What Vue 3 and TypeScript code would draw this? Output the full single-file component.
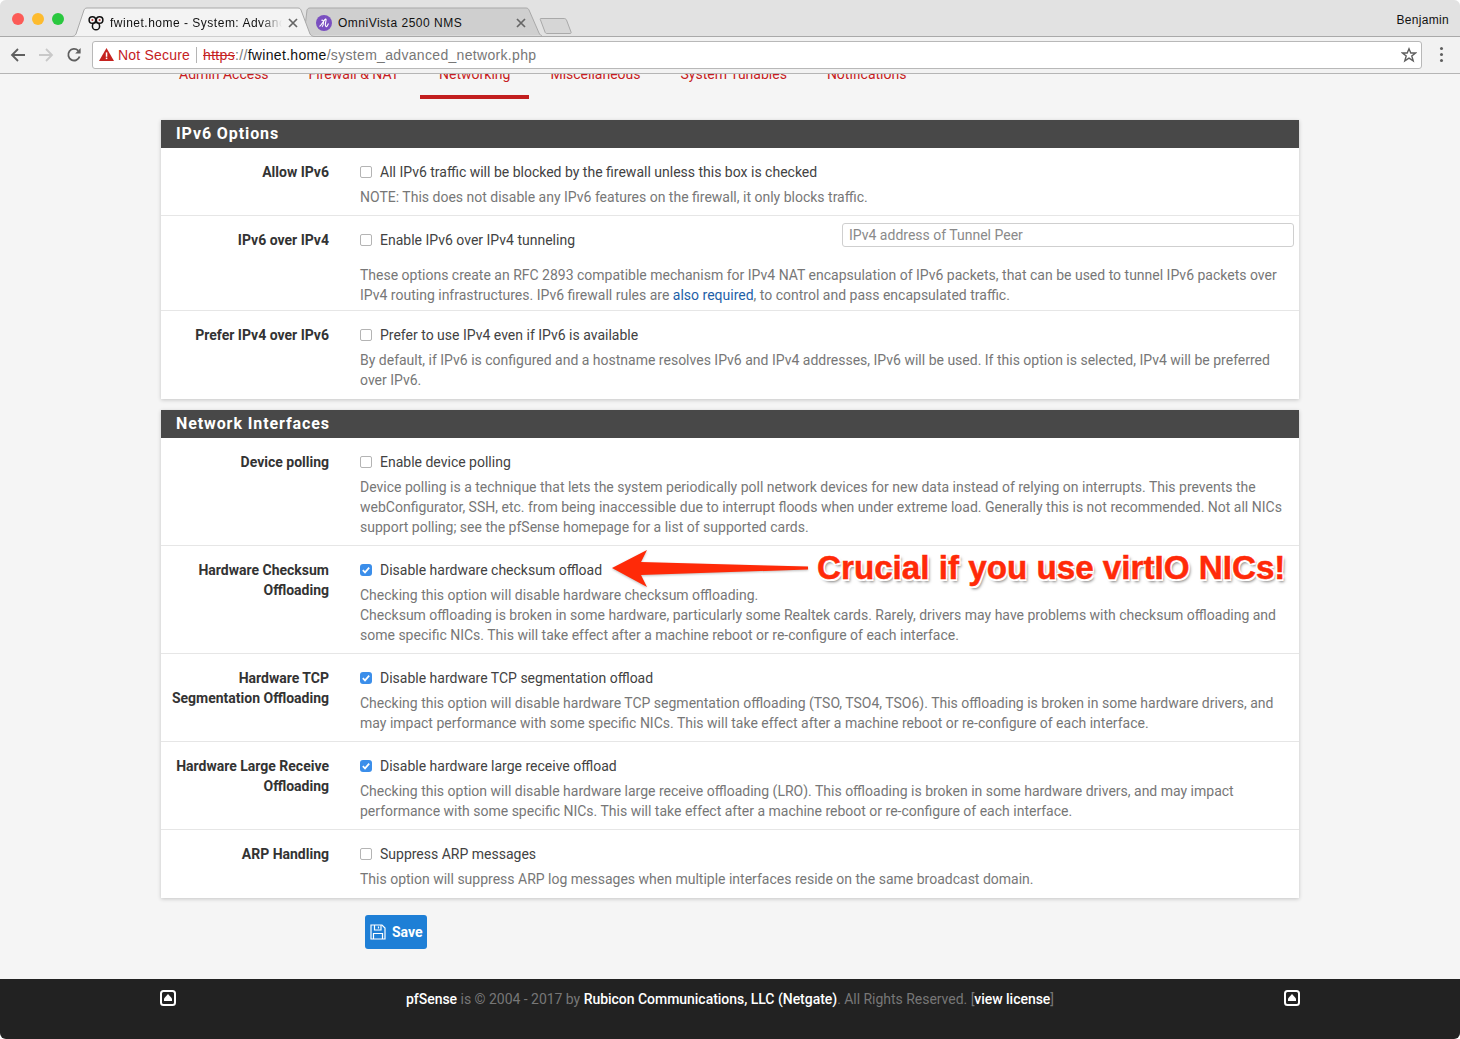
<script setup lang="ts">
interface Part { t: string; link?: boolean }
interface Row {
  label: string[];
  check: string;
  checked?: boolean;
  input?: string;
  wide?: boolean;
  note?: boolean;
  desc: Part[][];
}
const navItems = ['Admin Access', 'Firewall & NAT', 'Networking', 'Miscellaneous', 'System Tunables', 'Notifications'];
const panels: { title: string; rows: Row[] }[] = [
  {
    title: 'IPv6 Options',
    rows: [
      {
        label: ['Allow IPv6'],
        check: 'All IPv6 traffic will be blocked by the firewall unless this box is checked',
        desc: [[{ t: 'NOTE: This does not disable any IPv6 features on the firewall, it only blocks traffic.' }]],
      },
      {
        label: ['IPv6 over IPv4'],
        check: 'Enable IPv6 over IPv4 tunneling',
        input: 'IPv4 address of Tunnel Peer',
        wide: true,
        desc: [[
          { t: 'These options create an RFC 2893 compatible mechanism for IPv4 NAT encapsulation of IPv6 packets, that can be used to tunnel IPv6 packets over IPv4 routing infrastructures. IPv6 firewall rules are ' },
          { t: 'also required', link: true },
          { t: ', to control and pass encapsulated traffic.' },
        ]],
      },
      {
        label: ['Prefer IPv4 over IPv6'],
        check: 'Prefer to use IPv4 even if IPv6 is available',
        desc: [[{ t: 'By default, if IPv6 is configured and a hostname resolves IPv6 and IPv4 addresses, IPv6 will be used. If this option is selected, IPv4 will be preferred over IPv6.' }]],
      },
    ],
  },
  {
    title: 'Network Interfaces',
    rows: [
      {
        label: ['Device polling'],
        check: 'Enable device polling',
        desc: [[{ t: 'Device polling is a technique that lets the system periodically poll network devices for new data instead of relying on interrupts. This prevents the webConfigurator, SSH, etc. from being inaccessible due to interrupt floods when under extreme load. Generally this is not recommended. Not all NICs support polling; see the pfSense homepage for a list of supported cards.' }]],
      },
      {
        label: ['Hardware Checksum', 'Offloading'],
        check: 'Disable hardware checksum offload',
        checked: true,
        note: true,
        desc: [
          [{ t: 'Checking this option will disable hardware checksum offloading.' }],
          [{ t: 'Checksum offloading is broken in some hardware, particularly some Realtek cards. Rarely, drivers may have problems with checksum offloading and some specific NICs. This will take effect after a machine reboot or re-configure of each interface.' }],
        ],
      },
      {
        label: ['Hardware TCP', 'Segmentation Offloading'],
        check: 'Disable hardware TCP segmentation offload',
        checked: true,
        desc: [[{ t: 'Checking this option will disable hardware TCP segmentation offloading (TSO, TSO4, TSO6). This offloading is broken in some hardware drivers, and may impact performance with some specific NICs. This will take effect after a machine reboot or re-configure of each interface.' }]],
      },
      {
        label: ['Hardware Large Receive', 'Offloading'],
        check: 'Disable hardware large receive offload',
        checked: true,
        desc: [[{ t: 'Checking this option will disable hardware large receive offloading (LRO). This offloading is broken in some hardware drivers, and may impact performance with some specific NICs. This will take effect after a machine reboot or re-configure of each interface.' }]],
      },
      {
        label: ['ARP Handling'],
        check: 'Suppress ARP messages',
        desc: [[{ t: 'This option will suppress ARP log messages when multiple interfaces reside on the same broadcast domain.' }]],
      },
    ],
  },
];
</script>

<template>
  <div class="window">
    <div class="tabbar">
      <div class="lights">
        <span class="light red"></span><span class="light yellow"></span><span class="light green"></span>
      </div>
      <div class="tab active">
        <svg class="tabshape" width="246" height="30" viewBox="0 0 246 30">
          <path d="M0 29.5 C2 29.5 3 28.5 4 27 L12 3 C12.5 1.8 13.5 1 15 1 H226 C227.5 1 228.5 1.8 229 3 L238 27 C239 28.5 240 29.5 243 29.5" fill="#f3f3f3" stroke="#a9a9a9" />
        </svg>
        <svg class="favicon" width="16" height="16" viewBox="0 0 16 16" fill="none" stroke="#111" stroke-width="1.5">
          <circle cx="4.4" cy="5" r="3.3" /><circle cx="11.6" cy="5" r="3.3" /><circle cx="8" cy="11.2" r="3.6" />
          <circle cx="4.4" cy="5" r="1" fill="#b33" stroke="none" /><circle cx="11.6" cy="5" r="1" fill="#b33" stroke="none" />
        </svg>
        <span class="tabtext fade">fwinet.home - System: Advanc</span>
        <svg class="close" width="10" height="10" viewBox="0 0 10 10" stroke="#666" stroke-width="1.7"><path d="M1 1L9 9M9 1L1 9" /></svg>
      </div>
      <div class="tab inactive">
        <svg class="tabshape" width="240" height="30" viewBox="0 0 240 30">
          <path d="M0 28.5 L3 3 C3.5 1.8 4.5 1 6 1 H222 C223.5 1 224.5 1.8 225 3 L235 26 C236 28 237 28.5 238 28.5" fill="#cfcfcf" stroke="#a9a9a9" />
        </svg>
        <svg class="favicon" width="16" height="16" viewBox="0 0 16 16">
          <circle cx="8" cy="8" r="8" fill="#7a4fc0" />
          <path d="M3.5 11.5C6 9.5 8 5 9.5 4C10.5 3.5 10 6 9.5 8C9 10 9.5 12 10.8 11.5C11.5 11 12 9.5 12.5 8.5M5.5 5.5C6.5 4.5 7.5 5.5 7.5 7C7.5 9 7 11 6 11.8" fill="none" stroke="#fff" stroke-width="1.1" />
        </svg>
        <span class="tabtext">OmniVista 2500 NMS</span>
        <svg class="close" width="10" height="10" viewBox="0 0 10 10" stroke="#666" stroke-width="1.7"><path d="M1 1L9 9M9 1L1 9" /></svg>
      </div>
      <svg class="newtab" width="34" height="18" viewBox="0 0 34 18">
        <path d="M2 1.5 H25 C26 1.5 27 2 27.5 3 L32 15 C32.4 16 32 16.5 31 16.5 H8 C7 16.5 6.3 16 6 15 L1.5 3 C1 2 1 1.5 2 1.5Z" fill="#d6d6d6" stroke="#a9a9a9" />
      </svg>
      <span class="user">Benjamin</span>
    </div>

    <div class="toolbar">
      <svg class="tool" width="16" height="16" viewBox="0 0 16 16" fill="none" stroke="#5f5f5f" stroke-width="1.8"><path d="M15 8H2M8 2L2 8L8 14" /></svg>
      <svg class="tool" width="16" height="16" viewBox="0 0 16 16" fill="none" stroke="#c9c9c9" stroke-width="1.8"><path d="M1 8H14M8 2L14 8L8 14" /></svg>
      <svg class="tool" width="16" height="16" viewBox="0 0 16 16" fill="none" stroke="#5f5f5f" stroke-width="1.8"><path d="M13.6 9.5A5.8 5.8 0 1 1 12.2 3.6" /><path d="M14.6 1V6.4H9.2Z" fill="#5f5f5f" stroke="none" /></svg>
      <div class="urlbar">
        <svg width="15" height="13" viewBox="0 0 15 13"><path d="M7.5 0L15 13H0Z" fill="#c5221f" /><rect x="6.8" y="4.4" width="1.5" height="4.4" fill="#fff" /><rect x="6.8" y="9.6" width="1.5" height="1.5" fill="#fff" /></svg>
        <span class="insecure">Not Secure</span>
        <span class="sep"></span>
        <span class="url"><span class="https">https</span><span class="dim">://</span><span class="host">fwinet.home</span><span class="dim">/system_advanced_network.php</span></span>
        <svg class="star" width="16" height="16" viewBox="0 0 16 16" fill="none" stroke="#5f5f5f" stroke-width="1.4"><path d="M8 1.8L9.8 6H14.6L10.8 9L12.2 13.8L8 11.1L3.8 13.8L5.2 9L1.4 6H6.2Z" /></svg>
      </div>
      <div class="dots"><i></i><i></i><i></i></div>
    </div>

    <main class="page">
      <nav class="subnav">
        <a v-for="item in navItems" :key="item" class="navitem" :class="{ current: item === 'Networking' }">{{ item }}</a>
      </nav>

      <section v-for="panel in panels" :key="panel.title" class="panel">
        <h2 class="heading">{{ panel.title }}</h2>
        <div v-for="row in panel.rows" :key="row.check" class="row">
          <div class="label"><div v-for="l in row.label" :key="l">{{ l }}</div></div>
          <div class="content">
            <div class="checkline">
              <span class="box" :class="{ on: row.checked }">
                <svg v-if="row.checked" width="12" height="12" viewBox="0 0 12 12" fill="none" stroke="#fff" stroke-width="1.7"><path d="M2.8 6.2L5 8.4L9.2 3.6" /></svg>
              </span>
              <span class="checktext">{{ row.check }}</span>
              <span v-if="row.input" class="fakeinput">{{ row.input }}</span>
            </div>
            <div class="desc" :class="{ wide: row.wide }">
              <div v-for="(para, i) in row.desc" :key="i">
                <template v-for="part in para" :key="part.t"><a v-if="part.link" class="link">{{ part.t }}</a><template v-else>{{ part.t }}</template></template>
              </div>
            </div>
          </div>
          <div v-if="row.note" class="callout">
            <svg class="arrow" width="204" height="44" viewBox="0 0 204 44">
              <path d="M2 22L37 4L31 16L198 20.5L198 23.5L31 29L37 41Z" fill="#ff2a08" />
            </svg>
            <span class="callouttext">Crucial if you use virtIO NICs!</span>
          </div>
        </div>
      </section>

      <div class="actions">
        <button class="save" type="button">
          <svg width="16" height="16" viewBox="0 0 16 16" fill="none" stroke="#fff" stroke-width="1.2"><path d="M1 1H12L15 4V15H1Z" /><path d="M4.5 1V6H11V1M8.5 2.5V4.6M3.5 15V9.5H12.5V15" /></svg>
          Save
        </button>
      </div>

      <footer class="footer">
        <svg class="upicon" width="16" height="16" viewBox="0 0 16 16"><rect x="1" y="1" width="14" height="14" rx="2.5" fill="none" stroke="#fff" stroke-width="2" /><path d="M8 4L12 8.5V11H4V8.5Z" fill="#fff" /></svg>
        <p class="foottext"><b>pfSense</b> is © 2004 - 2017 by <b>Rubicon Communications, LLC (Netgate)</b>. All Rights Reserved. [<b>view license</b>]</p>
        <svg class="upicon" width="16" height="16" viewBox="0 0 16 16"><rect x="1" y="1" width="14" height="14" rx="2.5" fill="none" stroke="#fff" stroke-width="2" /><path d="M8 4L12 8.5V11H4V8.5Z" fill="#fff" /></svg>
      </footer>
    </main>
  </div>
</template>

<style>
html, body { background: #fff; }
</style>

<style scoped>
.window {
  width: 1460px;
  height: 1039px;
  overflow: hidden;
  border-radius: 6px;
  font-family: Roboto, "Liberation Sans", sans-serif;
  font-size: 14px;
  line-height: 20px;
  background: #f5f5f5;
}
.tabbar {
  height: 37px;
  box-sizing: border-box;
  display: flex;
  align-items: flex-end;
  background: #e2e2e2;
  border-bottom: 1px solid #a9a9a9;
  font-family: "Liberation Sans", sans-serif;
  font-size: 12px;
  color: #111;
}
.lights { display: flex; gap: 8px; width: 72px; padding-left: 12px; box-sizing: border-box; align-self: flex-start; padding-top: 13px; }
.light { width: 12px; height: 12px; border-radius: 50%; }
.red { background: #fc5b57; }
.yellow { background: #fdbb2e; }
.green { background: #2ac83f; }
.tab {
  position: relative;
  width: 232px;
  height: 29px;
  margin-bottom: -1px;
  display: flex;
  align-items: center;
  box-sizing: border-box;
  padding: 0 6px 0 16px;
}
.tab.active { z-index: 2; padding-left: 16px; }
.tab.inactive { width: 230px; padding-left: 12px; padding-right: 8px; }
.tabshape { position: absolute; left: 0; top: -1px; }
.favicon { position: relative; flex: none; }
.tabtext {
  position: relative;
  flex: 1;
  margin-left: 6px;
  white-space: nowrap;
  overflow: hidden;
  letter-spacing: 0.5px;
}
.fade {
  -webkit-mask-image: linear-gradient(to right, #000 88%, transparent 100%);
  mask-image: linear-gradient(to right, #000 88%, transparent 100%);
}
.close { position: relative; flex: none; margin-left: 6px; }
.newtab { margin: 0 0 1px 5px; }
.user { margin-left: auto; padding-right: 11px; align-self: flex-start; padding-top: 10px; letter-spacing: 0.3px; }

.toolbar {
  height: 37px;
  box-sizing: border-box;
  display: flex;
  align-items: center;
  gap: 12px;
  padding: 0 0 1px 10px;
  background: #f2f2f2;
  border-bottom: 1px solid #b5b5b5;
}
.urlbar {
  flex: none;
  width: 1330px;
  height: 28px;
  margin-left: -2px;
  box-sizing: border-box;
  display: flex;
  align-items: center;
  padding: 0 4px 0 6px;
  background: #fff;
  border: 1px solid #b8b8b8;
  border-radius: 3px;
  font-family: "Liberation Sans", sans-serif;
}
.insecure { margin-left: 4px; color: #c5221f; letter-spacing: 0.2px; }
.sep { width: 1px; height: 16px; margin: 0 6px; background: #b5b5b5; }
.url { letter-spacing: 0.32px; }
.https { color: #c5221f; text-decoration: line-through; }
.dim { color: #777; }
.host { color: #111; }
.star { margin-left: auto; }
.dots { display: flex; flex-direction: column; gap: 3px; margin-left: 6px; }
.dots i { width: 3px; height: 3px; border-radius: 50%; background: #5f5f5f; }

.page { height: 965px; display: flex; flex-direction: column; align-items: stretch; }
.subnav { height: 25px; flex: none; overflow: hidden; display: flex; padding-left: 159px; }
.navitem {
  height: 25px;
  margin-top: -10px;
  padding: 0 20px;
  color: #c71c22;
  line-height: 20px;
  position: relative;
}
.navitem.current::after {
  content: "";
  position: absolute;
  left: 1px;
  right: 1px;
  top: 31px;
  height: 4px;
  background: #c21e1e;
}
.panel {
  width: 1138px;
  margin: 21px 0 0 161px;
  background: #fff;
  box-shadow: 0 1px 4px rgba(0, 0, 0, 0.2);
}
.panel + .panel { margin-top: 11px; }
.heading {
  margin: 0;
  height: 28px;
  padding-left: 15px;
  background: #484848;
  color: #fff;
  font-size: 16px;
  font-weight: 700;
  line-height: 27px;
  letter-spacing: 0.9px;
}
.row {
  position: relative;
  display: flex;
  box-sizing: border-box;
  padding: 14px 0 8px;
  border-bottom: 1px solid #e6e6e6;
}
.row:last-child { border-bottom: 0; padding-bottom: 9px; }
.label {
  flex: none;
  width: 168px;
  text-align: right;
  font-weight: 700;
  color: #333;
}
.content { flex: none; width: 925px; margin-left: 31px; }
.checkline { display: flex; align-items: center; height: 20px; color: #424242; }
.box {
  flex: none;
  width: 12px;
  height: 12px;
  box-sizing: border-box;
  border: 1px solid #b4b4b4;
  border-radius: 2px;
  background: #fff;
  margin-right: 8px;
  display: flex;
  position: relative;
}
.box.on { background: #3b8eea; border: 0; border-radius: 3px; }
.fakeinput {
  box-sizing: border-box;
  width: 452px;
  height: 24px;
  margin: -10px -9px 0 auto;
  padding: 0 6px;
  border: 1px solid #cfcfcf;
  border-radius: 3px;
  line-height: 22px;
  color: #8a8a8a;
  background: #fff;
}
.desc { margin-top: 5px; color: #777; }
.desc.wide { margin-top: 15px; margin-bottom: -3px; }
.link { color: #1e5fa8; }
.callout { position: absolute; left: 0; top: 0; right: 0; bottom: 0; pointer-events: none; }
.arrow { position: absolute; left: 449px; top: 0; filter: drop-shadow(0 1px 1px rgba(0, 0, 0, 0.25)); }
.callouttext {
  position: absolute;
  left: 656px;
  top: 2px;
  white-space: nowrap;
  font-family: "Liberation Sans", sans-serif;
  font-weight: 700;
  font-size: 33.2px;
  line-height: 40px;
  color: #ff2a08;
  -webkit-text-stroke: 0.5px #ff2a08;
  text-shadow: 1.5px 1.5px 0 #fff, -1.5px -1.5px 0 #fff, 1.5px -1.5px 0 #fff, -1.5px 1.5px 0 #fff, 2px 3px 3px rgba(0, 0, 0, 0.5);
}
.actions { height: 81px; flex: none; padding: 17px 0 0 365px; box-sizing: border-box; }
.save {
  display: flex;
  align-items: center;
  gap: 6px;
  width: 62px;
  height: 34px;
  padding: 0 0 0 5px;
  border: 0;
  border-radius: 3px;
  background: #1e7fd6;
  color: #fff;
  font: 700 14px Roboto, sans-serif;
}
.footer {
  flex: 1;
  display: flex;
  justify-content: space-between;
  align-items: flex-start;
  padding: 10px 160px 0;
  background: #222;
  color: #777;
}
.upicon { margin-top: 1px; }
.foottext { margin: 0; letter-spacing: -0.03px; }
.foottext b { color: #fff; font-weight: 500; }
</style>
